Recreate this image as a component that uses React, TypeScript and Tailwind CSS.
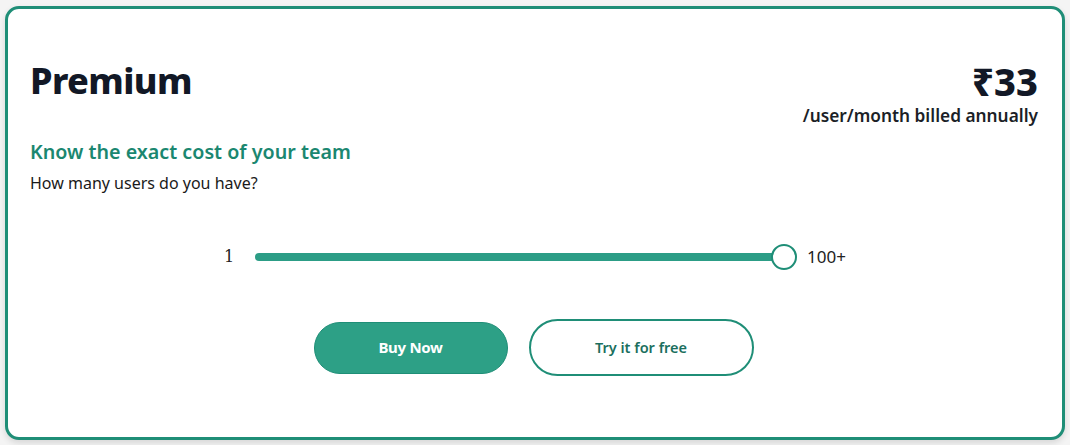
export default function App() {
  return (
    <div className="w-[1070px] h-[445px] bg-[#f4f4f4] pt-[6px] pl-[5px]" style={{ fontFamily: '"Noto Sans", "Open Sans", sans-serif' }}>
      <div className="w-[1060px] h-[434px] bg-white border-[3px] border-[#1f8e77] rounded-[14px] shadow-[0_3px_6px_rgba(0,0,0,0.12)] px-[22px] pt-[50px]">
        {/* Header */}
        <div className="flex justify-between items-start">
          <h1 className="text-[36px] leading-[44px] font-extrabold text-[#121826] tracking-[-0.6px]">Premium</h1>
          <div className="flex flex-col items-end pr-[2px]">
            <div className="text-[38px] leading-[44px] font-extrabold text-[#121826]">₹33</div>
            <div className="text-[17.3px] leading-[22px] font-semibold text-[#1c1f27] mt-[2px]">/user/month billed annually</div>
          </div>
        </div>

        <h2 className="text-[19.7px] leading-[26px] font-semibold text-[#1b8770] mt-[12px]">Know the exact cost of your team</h2>
        <p className="text-[16px] leading-[22px] text-[#1a1a1a] mt-[7px]">How many users do you have?</p>

        {/* Slider */}
        <div className="flex items-center justify-center mt-[50px]">
          <span className="text-[16px] text-[#222] w-[8px]" style={{ fontFamily: '"DejaVu Serif", serif' }}>1</span>
          <div className="relative w-[543px] h-[26px] ml-[23px] flex items-center">
            <div className="w-[530px] h-[8px] rounded-full bg-[#2c9d86]" />
            <div className="absolute left-[516px] top-0 w-[26px] h-[26px] rounded-full bg-white border-[2px] border-[#1f8e77]" />
          </div>
          <span className="text-[17px] text-[#222] ml-[9px] w-[39px]">100+</span>
        </div>

        {/* Buttons */}
        <div className="flex items-center justify-center gap-[21px] mt-[49px] pr-[3px]">
          <button className="w-[194px] h-[52px] rounded-full bg-[#2da086] border border-[#1f8e77] text-white text-[15px] font-bold tracking-[-0.3px]">
            Buy Now
          </button>
          <button className="w-[225px] h-[57px] rounded-full bg-white border-[2px] border-[#1f8e77] text-[#1b6f5e] text-[14.5px] font-semibold">
            Try it for free
          </button>
        </div>
      </div>
    </div>
  );
}
